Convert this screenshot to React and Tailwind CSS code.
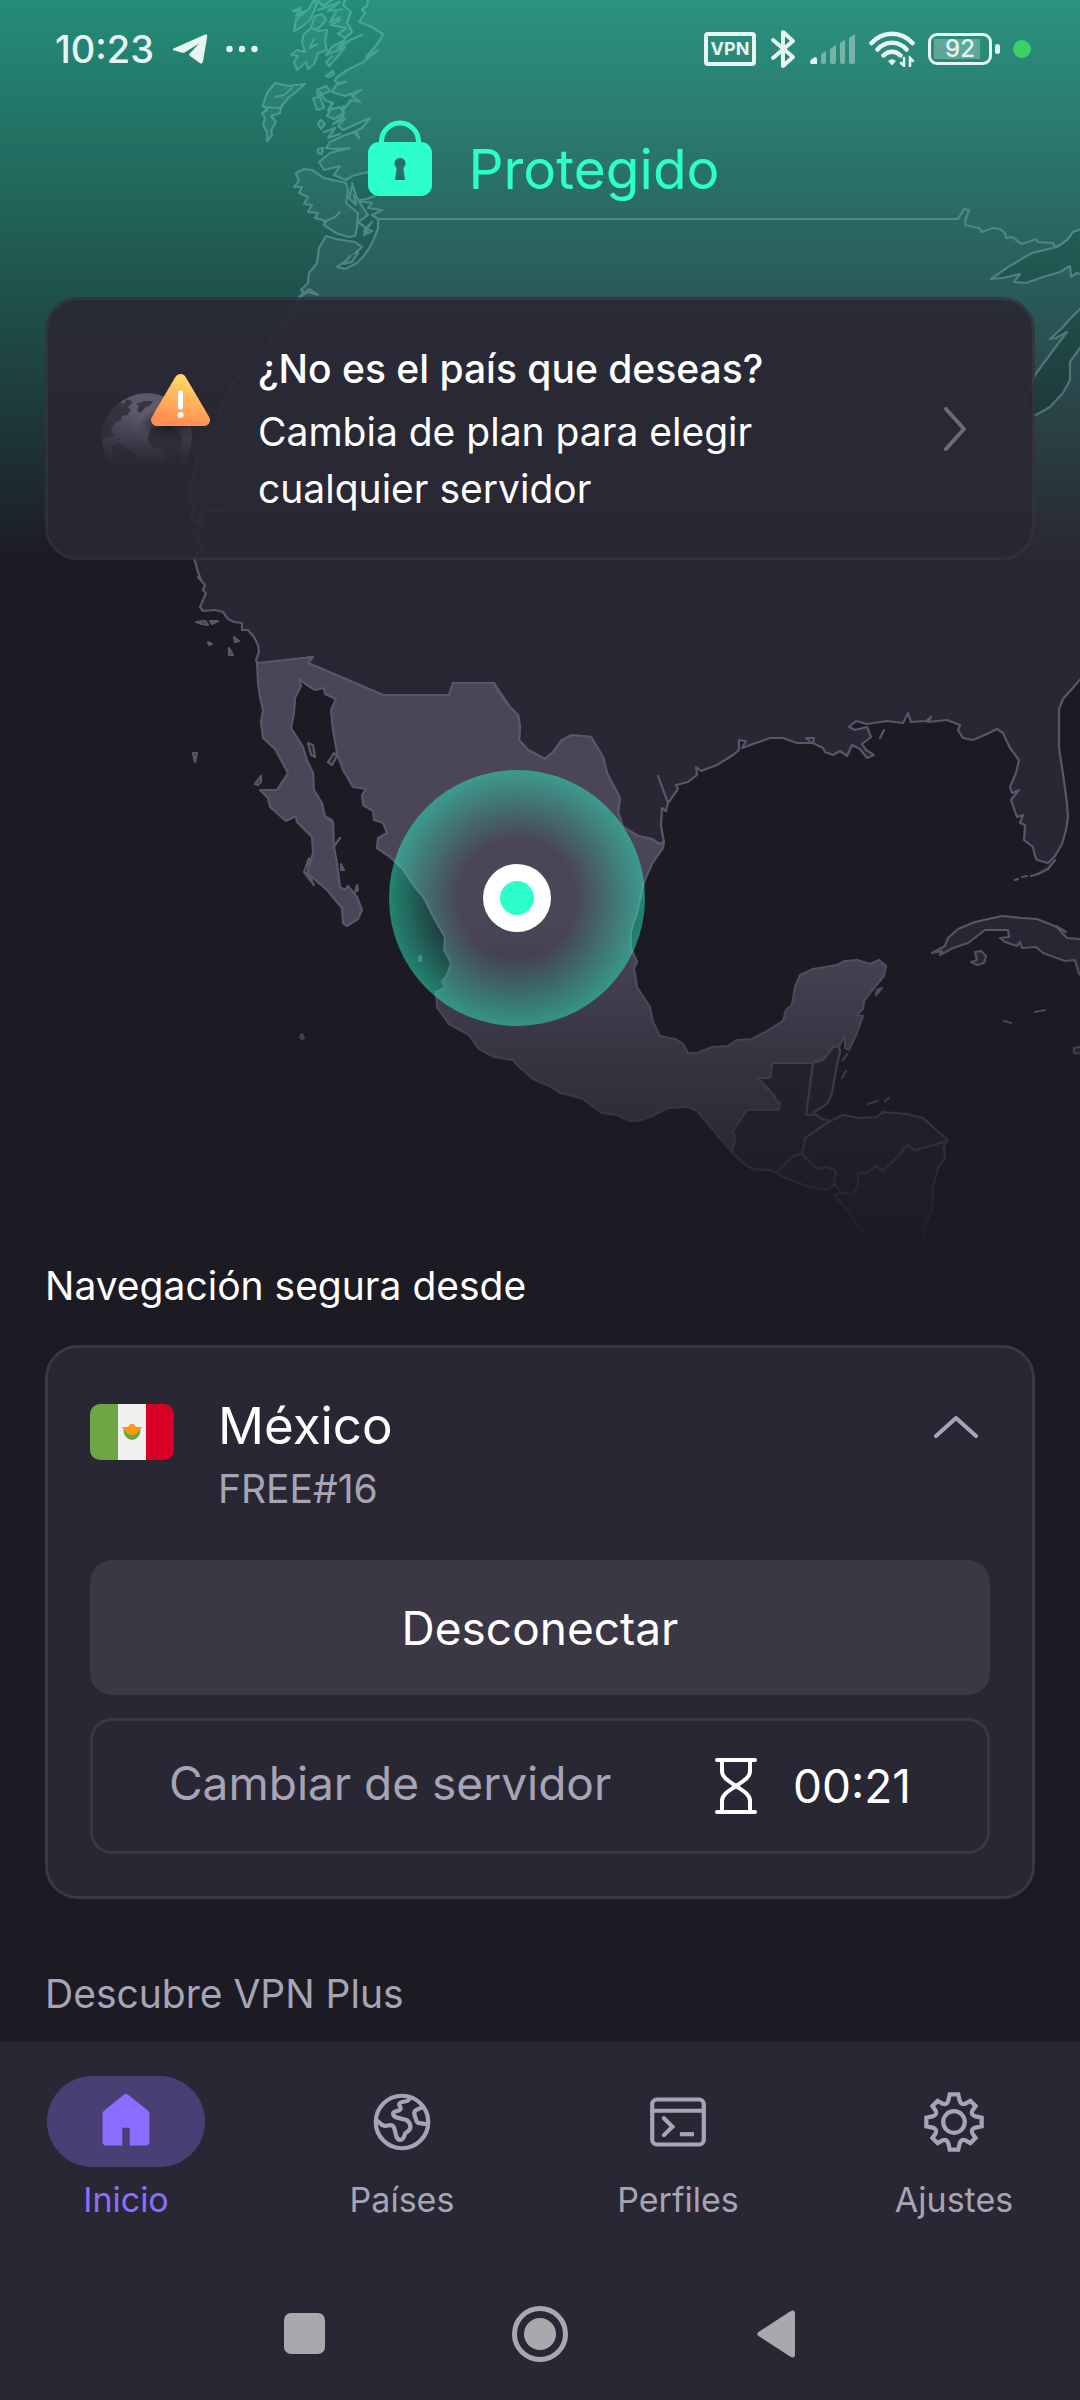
import React, { useState } from 'react';

const CONTINENT =
  'M365 -6 L368 0 367 6 362 9 365 13 359 22 370 26 383 34 380 40 374 48 366 57 377 51 362 63 347 70 336 78 335 81 338 83 346 82 336 85 332 92 345 96 361 90 352 96 360 102 351 100 345 108 338 112 344 106 343 116 333 124 345 118 338 126 343 130 370 118 362 128 354 132 359 138 356 131 343 136 330 142 326 148 334 149 350 148 330 153 319 162 324 170 340 166 334 175 346 180 352 176 368 172 372 185 375 196 366 199 356 201 372 203 368 208 382 210 372 215 378 219 378 228 375 236 372 243 368 250 362 258 357 263 345 269 337 267 350 258 362 247 355 242 336 239 326 236 319 248 317 263 309 273 308 283 301 290 304 292 299 297 308 292 318 295 309 289 298 300 272 340 251 362 231 384 220 413 217 427 196 444 194 453 198 462 188 488 194 510 190 516 203 528 198 516 206 509 222 511 205 511 201 517 203 528 194 535 196 538 202 545 200 551 194 558 198 572 201 580 198 577 205 585 203 590 206 593 200 607 203 611 215 610 223 612 228 619 234 622 242 623 242 630 248 630 254 637 258 645 259 652 256 660 258 664 313 657 308 663 383 695 449 695 453 683 494 683 510 707 518 715 520 727 519 740 528 750 545 759 553 752 562 740 572 735 591 737 603 757 607 773 620 798 618 812 623 827 638 836 652 839 659 844 664 842 661 826 662 808 666 811 668 803 658 776 668 803 678 789 676 785 688 782 697 775 696 767 701 771 717 765 733 755 739 750 739 740 746 741 742 748 753 744 770 738 783 738 797 743 812 743 806 738 814 738 813 743 823 748 825 752 833 755 840 751 847 756 852 745 860 749 867 758 874 755 866 750 862 744 871 737 867 727 855 730 849 727 856 721 867 724 887 721 903 723 908 713 911 722 926 721 931 717 928 722 947 720 960 725 958 730 963 738 973 740 987 734 997 729 1003 733 1010 748 1019 760 1016 773 1010 787 1012 793 1019 790 1011 800 1017 817 1023 815 1020 823 1025 825 1024 840 1033 847 1035 856 1037 860 1048 863 1055 856 1062 844 1066 830 1068 817 1067 803 1063 774 1059 748 1059 709 1063 699 1071 690 1090 668 V-6Z';

const MEXICO =
  'M257 663 L313 657 308 663 383 695 449 695 453 683 494 683 497 690 510 707 518 715 520 727 519 740 528 750 545 759 553 752 562 740 572 735 591 737 603 757 607 773 620 798 618 812 623 827 638 836 652 839 659 844 664 842 663 848 652 864 644 882 637 913 631 931 631 948 637 962 634 968 637 987 650 1007 653 1022 660 1036 675 1039 683 1044 688 1053 697 1053 712 1047 728 1046 737 1040 752 1039 767 1031 783 1021 786 1010 792 1005 795 987 800 975 813 969 837 965 845 961 857 960 870 964 879 960 886 966 884 976 873 989 864 1001 863 1009 857 1015 863 1016 857 1033 849 1050 845 1048 845 1036 839 1046 833 1047 823 1060 815 1060 813 1063 772 1063 770 1078 758 1078 765 1087 774 1095 776 1101 780 1103 778 1110 747 1110 733 1131 735 1138 732 1152 718 1136 697 1111 688 1107 668 1108 652 1116 638 1121 630 1121 617 1115 602 1113 583 1099 561 1093 551 1087 533 1079 519 1067 513 1060 494 1057 479 1049 469 1035 449 1024 437 1007 436 992 446 987 442 982 447 975 451 963 444 950 445 937 434 918 424 898 412 883 402 868 390 857 377 848 378 838 387 833 383 823 374 820 373 811 363 805 362 795 366 789 353 787 343 770 337 753 333 730 331 710 336 699 325 694 324 688 315 690 307 685 299 679 301 686 295 698 294 713 291 728 303 747 307 760 313 773 314 790 322 803 325 817 333 822 334 847 337 863 340 887 345 890 348 886 357 897 362 910 358 919 347 926 343 923 342 908 327 890 307 873 313 853 312 837 297 822 296 816 286 821 270 807 268 798 260 790 277 790 288 773 275 749 263 738 261 722 263 710 260 697 258 683Z';

const CENTRAL_AMERICA =
  'M839 1046 L840 1052 836 1070 832 1093 828 1103 813 1113 822 1119 830 1121 843 1115 860 1118 877 1117 883 1112 907 1114 923 1118 933 1127 948 1140 944 1146 945 1158 938 1168 933 1187 932 1211 926 1223 922 1244 930 1268 H873 L877 1247 860 1229 848 1211 834 1195 841 1193 835 1184 827 1190 810 1187 785 1178 770 1170 753 1169 743 1163 732 1152 735 1138 733 1131 747 1110 778 1110 780 1103 776 1101 774 1095 758 1078 770 1078 772 1063 813 1063 823 1060 833 1047Z';

const BORDERS = [
  'M378 219 H958 L964 209 969 210 966 218 965 225 979 228 982 232 993 228 1000 229 1005 233 1006 238 1012 237 1022 244 1036 239 1038 242 1053 243 1055 247 1060 245',
  'M813 1063 L806 1115 H813',
  'M830 1121 L805 1138 802 1154 793 1156 777 1172',
  'M802 1154 L817 1169 827 1167 836 1171 833 1187',
  'M841 1193 L852 1194 858 1187 858 1173 867 1173 876 1166 883 1171 898 1156 907 1145 915 1150 930 1146 947 1141',
  'M877 1247 L892 1251 904 1248 918 1255 925 1252',
];

const LAKES = [
  'M991 279 L1008 267 1032 253 1057 247 1067 240 1073 232 1090 226 V277 L1077 273 1071 277 1070 266 1060 272 1043 277 1026 283 1014 282 1020 274 1003 278Z',
  'M1090 302 L1080 309 1067 322 1062 328 1050 339 1056 338 1067 332 1057 345 1046 360 1035 375 1026 397 1026 413 1036 415 1050 407 1063 393 1070 380 1070 362 1080 348 1090 342Z',
];

const ISLANDS = [
  // Vancouver
  'M296 173 L304 169 312 170 324 178 346 183 348 190 346 203 358 213 357 228 355 236 348 237 336 233 324 225 326 221 315 218 318 213 308 212 312 205 304 204 308 197 299 193 302 187 294 187 299 181Z M324 222 L335 217 340 212',
  'M352 183 L356 196 362 206 368 215 358 222 366 228 372 222 364 232 M352 186 L349 198 356 205 354 195',
  'M365 228 L372 231 364 235 368 229 M350 256 L344 264 352 262 358 253',
  // Haida Gwaii
  'M275 83 L288 86 305 84 296 92 288 98 281 107 280 113 271 116 276 122 271 130 272 135 267 141 267 132 263 125 265 118 262 113 267 110 263 105 267 93Z M263 107 L279 108 M275 97 L284 95 292 88',
  // Alexander archipelago
  'M293 11 L301 8 296 16 308 10 314 0 317 4 310 20 300 28 294 31 296 20 305 12Z',
  'M317 0 L323 6 335 -2 M318 10 L340 2 328 11 346 9 349 20 343 16 330 22 336 12 M310 30 L315 16 322 14 326 20 319 28Z',
  'M345 0 L343 5 351 12 347 22 352 32 345 38 338 34 346 28 331 25 340 20',
  'M304 34 L311 28 318 31 327 30 325 42 327 50 318 53 314 64 308 69 306 62 297 70 294 62 298 56 291 55 297 50 305 52 302 42Z M314 39 L310 48 317 44',
  'M362 35 L350 40 338 48 345 40 333 46 326 55 334 52 345 47 338 56 329 66 326 62 332 56',
  'M326 76 L333 71 334 74 329 77Z M317 90 L326 86 330 91 323 94 318 96Z M313 98 L320 97 324 108 317 110Z',
  'M320 92 L325 100 333 103 328 110 340 107 344 113 334 119 327 116 331 108 M321 120 L325 124 321 129 318 124Z',
  'M324 132 L335 128 328 138 340 134 M318 149 L323 148 322 154 318 153Z',
  // Pacific
  'M196 622 L205 621 208 625 202 624Z M210 621 L218 621 212 624Z M208 642 L212 644 209 645Z M234 637 L239 641 235 642Z M229 648 L233 655 229 655Z',
  'M193 753 L197 753 195 762Z M255 784 L261 776 261 782 258 785Z M308 743 L313 745 315 757 311 755Z M328 762 L334 753 337 756 332 765Z',
  'M300 1037 L302 1034 304 1038 302 1039Z M419 957 L421 956 421 961 419 961Z M309 858 L304 872 314 885 308 874Z M332 820 L326 817 327 825Z M335 845 L340 838 M341 864 L344 870 341 870Z M355 892 L357 885 358 890Z',
  // Caribbean
  'M932 953 L945 946 948 938 958 929 975 922 1002 916 1022 918 1037 919 1057 927 1067 938 1090 940 V980 L1079 974 1075 960 1065 961 1043 953 1036 947 1022 948 1020 942 1017 946 1005 942 1000 938 1009 937 1008 930 985 930 968 943 953 948 940 955 942 951Z',
  'M1056 926 L1066 932',
  'M975 952 L981 951 986 956 984 963 977 965 971 962 977 960Z',
  'M1035 1012 L1045 1010Z M1004 1021 L1011 1023Z M876 995 L877 990 882 988Z M843 1060 L847 1054Z M842 1078 L846 1071Z M868 1104 L878 1101Z M885 1101 L889 1098Z M1090 1045 L1074 1048 1074 1053 1090 1054Z',
  'M752 1041 L760 1036 768 1038 761 1045 753 1044Z M631 955 L637 962 634 967 M880 738 L884 730',
  'M1015 880 L1018 879 M1022 877 L1027 876 M1031 876 L1038 874 1048 869 1055 860',
];

// Background map with the location marker
const MapBackground = () => (
  <svg viewBox="0 0 1080 1280" className="absolute inset-x-0 top-0 w-full" role="img" aria-label="Mapa: México">
    <defs>
      <linearGradient id="glow" x1="0" y1="0" x2="0" y2="560" gradientUnits="userSpaceOnUse">
        <stop offset="0" stopColor="#2cffcc" stopOpacity="0.5" />
        <stop offset="1" stopColor="#2cffcc" stopOpacity="0" />
      </linearGradient>
      <linearGradient id="fade" x1="0" y1="920" x2="0" y2="1256" gradientUnits="userSpaceOnUse">
        <stop offset="0" stopColor="#1c1b24" stopOpacity="0" />
        <stop offset="1" stopColor="#1c1b24" />
      </linearGradient>
      <radialGradient id="halo">
        <stop offset="0.46" stopColor="#2cffcc" stopOpacity="0" />
        <stop offset="1" stopColor="#2cffcc" stopOpacity="0.46" />
      </radialGradient>
    </defs>
    <g fill="#292733" stroke="#5a566a" strokeWidth="2.2" strokeLinejoin="round" strokeLinecap="round">
      <path d={CONTINENT} />
      <path d={CENTRAL_AMERICA} />
      {ISLANDS.map((d) => <path key={d} d={d} />)}
      {BORDERS.map((d) => <path key={d} d={d} fill="none" />)}
      {LAKES.map((d) => <path key={d} d={d} fill="#1c1b24" />)}
      <path d={MEXICO} fill="#4a4657" />
    </g>
    <rect y="920" width="1080" height="360" fill="url(#fade)" />
    <rect width="1080" height="560" fill="url(#glow)" />
    <circle cx="517" cy="898" r="128" fill="url(#halo)" />
    <circle cx="517" cy="898" r="34" fill="#fff" />
    <circle cx="517" cy="898" r="17" fill="#2cffcc" />
  </svg>
);

const StatusBar = () => (
  <div className="flex h-[97px] items-center justify-between pr-[49px] pl-[55px] text-[#e6f5f1]">
    <div className="flex items-center gap-[18px]">
      <span className="text-[38px] leading-[48px] font-medium">10:23</span>
      <svg viewBox="0 0 36 30" className="h-[30px] w-9" fill="currentColor">
        <path d="M1.500 14.500 33 .6c1.600-.6 2.500.3 2.200 2L31 27.600c-.3 1.800-1.800 2.300-3.200 1.300L18 22c-1-.8-1-1.600-.2-2.500L27 9.500 13 18.300c-1 .6-2 .7-3 .4l-8.300-2.400c-1-.4-1.100-1.300-.2-1.800z" />
      </svg>
      <svg viewBox="0 0 32 8" className="h-2 w-8" fill="currentColor">
        <circle cx="3.500" cy="4" r="3.200" /><circle cx="16" cy="4" r="3.200" /><circle cx="28.500" cy="4" r="3.200" />
      </svg>
    </div>
    <div className="flex items-center gap-[13px]">
      <span className="flex h-[34px] w-[52px] items-center justify-center rounded border-4 border-current text-[18px] leading-none font-bold">VPN</span>
      <svg viewBox="0 0 28 40" className="h-10 w-7" fill="none" stroke="currentColor" strokeWidth="4" strokeLinejoin="round" strokeLinecap="round">
        <path d="M4 11 24 28 14 37V3l10 9L4 29" />
      </svg>
      <svg viewBox="0 0 46 30" className="h-[30px] w-[46px]" fill="currentColor">
        <path d="M0 28q0-2 2-3l3-2q2 0 2 2v5H2q-2 0-2-2z" />
        <path opacity=".4" d="M11 20l5-3v11q0 2-2 2h-1q-2 0-2-2zM20 15l6-4v17q0 2-2 2h-2q-2 0-2-2zM30 9l5-3v22q0 2-2 2h-1q-2 0-2-2zM39 4l6-4v28q0 2-2 2h-2q-2 0-2-2z" />
      </svg>
      <svg viewBox="0 0 46 36" className="h-9 w-[46px]" fill="none" stroke="currentColor" strokeWidth="4.500" strokeLinecap="round">
        <path d="M2.500 12C14-.5 32-.5 43.500 12M8.500 18.500c8-9 21-9 29 0M14.500 24.500c5-5 12-5 17 0" />
        <path d="M19 30q4-3.500 8 0l-4 4.500z" fill="currentColor" stroke="none" />
        <path d="M35 27v8l-3-3M41 35v-8l3 3" strokeWidth="2.500" />
      </svg>
      <span className="flex items-center gap-[3px]">
        <span className="flex h-8 w-16 items-center rounded-[9px] border-3 border-current p-[3px]">
          <span className="flex h-full w-[46px] items-center justify-center bg-white/25 pl-[6px] text-[24px] leading-none font-medium">92</span>
        </span>
        <span className="h-[10px] w-[5px] rounded-sm bg-current" />
      </span>
      <span className="h-[18px] w-[18px] rounded-full bg-[#3ad168]" />
    </div>
  </div>
);

const LockIcon = () => (
  <svg viewBox="0 0 64 76" className="h-[76px] w-16" fill="none">
    <path d="M13.500 26v-4.500a18.500 18.500 0 0 1 37 0V26" stroke="#2cffcc" strokeWidth="5" />
    <rect y="22" width="64" height="54" rx="11" fill="#2cffcc" />
    <path d="M32 38a5.500 5.500 0 0 1 3.300 9.900L37 60H27l1.700-12.100A5.500 5.500 0 0 1 32 38z" fill="#2b6e66" />
  </svg>
);

const GlobeWarning = () => (
  <svg viewBox="0 0 110 110" className="h-[110px] w-[110px] shrink-0">
    <defs>
      <radialGradient id="ball" cx="0.5" cy="0.3" r="0.6">
        <stop offset="0" stopColor="#696578" />
        <stop offset="1" stopColor="#4a4756" />
      </radialGradient>
      <linearGradient id="ballFade" x1="0" y1="0" x2="0" y2="1">
        <stop offset="0.3" stopColor="#fff" />
        <stop offset="0.85" stopColor="#fff" stopOpacity="0" />
      </linearGradient>
      <mask id="ballMask"><rect width="110" height="110" fill="url(#ballFade)" /></mask>
      <clipPath id="ballClip"><circle cx="47" cy="64" r="45" /></clipPath>
      <linearGradient id="warn" x1="0.6" y1="0" x2="0.3" y2="1">
        <stop offset="0" stopColor="#ffd366" />
        <stop offset="1" stopColor="#ff9051" />
      </linearGradient>
      <radialGradient id="shade">
        <stop offset="0" stopColor="#131218" />
        <stop offset="1" stopColor="#131218" stopOpacity="0" />
      </radialGradient>
    </defs>
    <g mask="url(#ballMask)" clipPath="url(#ballClip)">
      <circle cx="47" cy="64" r="45" fill="url(#ball)" />
      <path fill="#383541" d="M14 33l5-5 5 2 3-5 6 3-5 5 3 3-4 5-5 1-1 4-5 2-4 5-1 4 4 5-6 1-7 2-3-4 1-12zM36 30l8-3h9l-3 5-4 1-6 6-3-3 2-4zM12 71l7-2 6 4 4 3 8 4-3 9-2 8-8 4-6-4-2-9-4-7zM48 63l3-9 16-2 12 6 4 8-4 9 1 10-5 8-6 6-4-8 1-9-5-7-8-2-5-5z" />
      <ellipse cx="70" cy="50" rx="32" ry="17" fill="url(#shade)" />
    </g>
    <path d="M80.500 6 104 46H57z" fill="url(#warn)" stroke="url(#warn)" strokeWidth="12" strokeLinejoin="round" />
    <path d="M80.500 19v14" stroke="#fff" strokeWidth="5" strokeLinecap="round" />
    <circle cx="80.500" cy="41" r="3" fill="#fff" />
  </svg>
);

const MexicoFlag = () => (
  <svg viewBox="0 0 84 56" className="mt-3 h-14 w-[84px] shrink-0 rounded-[10px]" role="img" aria-label="Bandera de México">
    <path fill="#6da544" d="M0 0h28v56H0z" />
    <path fill="#f0f0f0" d="M28 0h28v56H28z" />
    <path fill="#d80027" d="M56 0h28v56H56z" />
    <path fill="#6da544" d="M33.500 26a8.500 10 0 0 0 17 0z" />
    <path fill="#ff9811" d="M32 23h6q4-7 8 0h6l-2 3h-1q-2 5-7 5t-7-5h-1z" />
  </svg>
);

const HourglassIcon = () => (
  <svg viewBox="0 0 42 58" className="h-[58px] w-[42px]" fill="none" stroke="#fff" strokeWidth="4" strokeLinecap="round">
    <path d="M2 3h38M2 55h38M7 4v10c0 7 7 10 14 15 7-5 14-8 14-15V4M7 54V44c0-7 7-10 14-15 7 5 14 8 14 15v10" />
  </svg>
);

const navItems = [
  {
    id: 'inicio',
    label: 'Inicio',
    icon: (
      <path
        fill="currentColor"
        stroke="none"
        d="M29 3.500q3-2.500 6 0l20.500 16.500Q57 21.200 57 23v30q0 4-4 4H36V38h-8v19H11q-4 0-4-4V23q0-1.800 1.500-3z"
      />
    ),
  },
  {
    id: 'paises',
    label: 'Países',
    icon: (
      <>
        <circle cx="32" cy="32" r="28" />
        <path d="M40 6c0 6-11 3-11 7 0 3 2 2 1.500 5s-8 1.500-8 5c0 6 11 5 14.500 7 3 2 4 4 4 7 0 5-5 5-6 8-1 4-2 6-5 6-6 0-4-12-8-15-3-2-6 1-9 0-4-1-5-4-7-5M54 16l-6.500 3q-3 1.500-2.300 5l2 6q.6 3 3.300 3.300l8 1" />
      </>
    ),
  },
  {
    id: 'perfiles',
    label: 'Perfiles',
    icon: (
      <>
        <rect x="4.500" y="8" width="55" height="48" rx="5" />
        <path d="M4.500 20h55M17 28l9 9-9 9" />
        <path d="M34 45h15" strokeLinecap="butt" />
      </>
    ),
  },
  {
    id: 'ajustes',
    label: 'Ajustes',
    icon: (
      <>
        <path d="M27.500 2.500H36.500L38 9Q39.500 14 44 12.500L49.500 9.500 55 15 51.500 20Q49.500 24.500 55 26L61.500 27.500V36.500L55 38Q49.500 39.500 51.500 44L55 49 49.500 54.500 44 51.500Q39.500 50 38 55L36.500 61.500H27.500L26 55Q24.500 50 20 51.500L14.500 54.500 9 49 12.500 44Q14.500 39.500 9 38L2.500 36.500V27.500L9 26Q14.500 24.500 12.500 20L9 15 14.500 9.500 20 12.500Q24.500 14 26 9Z" />
        <circle cx="32" cy="32" r="11.500" />
      </>
    ),
  },
];

const BottomNav = ({ active, onSelect }) => (
  <nav className="flex justify-between px-[47px] pt-[34px] pb-[42px]">
    {navItems.map((item) => (
      <button
        key={item.id}
        onClick={() => onSelect(item.id)}
        className={`flex w-[158px] flex-col items-center gap-[7px] ${active === item.id ? 'text-[#8a6eff]' : 'text-[#a7a4b5]'}`}
      >
        <span className={`flex h-[91px] w-full items-center justify-center rounded-full ${active === item.id ? 'bg-[#4a3f75]' : ''}`}>
          <svg viewBox="0 0 64 64" className="h-[60px] w-[60px]" fill="none" stroke="currentColor" strokeWidth="4.500" strokeLinecap="round">
            {item.icon}
          </svg>
        </span>
        <span className="text-[34px] leading-[51px]">{item.label}</span>
      </button>
    ))}
  </nav>
);

// Android navigation buttons
const SystemNav = () => (
  <div className="flex h-[133px] items-center justify-center gap-[180px] text-[#a9a8ad]">
    <button aria-label="Recientes" className="flex w-14 justify-center">
      <span className="h-[41px] w-[41px] rounded-[7px] bg-current" />
    </button>
    <button aria-label="Pantalla de inicio" className="flex h-14 w-14 items-center justify-center rounded-full border-5 border-current">
      <span className="h-8 w-8 rounded-full bg-current" />
    </button>
    <button aria-label="Atrás" className="flex w-14 justify-center">
      <svg viewBox="0 0 38 48" className="h-12 w-[38px]" fill="currentColor">
        <path d="M1.500 22 33 1.500Q38-1.500 38 4v40q0 5.500-5 2.500L1.500 26Q-1 24 1.500 22z" />
      </svg>
    </button>
  </div>
);

export default function App() {
  const [tab, setTab] = useState('inicio');
  const [open, setOpen] = useState(true);

  return (
    <div className="relative flex min-h-screen flex-col bg-[#1c1b24] font-['Inter',sans-serif] text-white">
      <MapBackground />

      <div className="relative flex flex-1 flex-col">
        <StatusBar />

        <header className="flex items-center justify-center gap-9 pt-[10px] pl-2">
          <LockIcon />
          <h1 className="pt-6 text-[55px] leading-[77px] text-[#2cffcc]">Protegido</h1>
        </header>

        <main className="flex flex-1 flex-col px-[45px] pt-[89px] pb-5">
          {/* Aviso de cambio de plan */}
          <button className="flex w-full items-center rounded-[33px] border-3 border-[#34313f]/80 bg-[#292733]/92 bg-clip-padding py-10 pr-[66px] pl-[52px] text-left text-[39px] leading-[57px]">
            <GlobeWarning />
            <span className="ml-12 flex flex-1 flex-col gap-[6px]">
              <span className="font-medium">¿No es el país que deseas?</span>
              <span className="max-w-[560px]">Cambia de plan para elegir cualquier servidor</span>
            </span>
            <svg viewBox="0 0 22 44" className="h-11 w-[22px]" fill="none" stroke="#6d697d" strokeWidth="4" strokeLinecap="round" strokeLinejoin="round">
              <path d="M2 2l18 20L2 42" />
            </svg>
          </button>

          <h2 className="mt-auto text-[39px] leading-[57px]">Navegación segura desde</h2>

          {/* Conexión actual */}
          <section className="mt-[31px] rounded-[33px] border-3 border-[#3b3745] bg-[#292733] px-[42px] pt-11 pb-[42px]">
            <button onClick={() => setOpen(!open)} aria-expanded={open} className="flex w-full items-start text-left">
              <MexicoFlag />
              <span className="ml-11 flex flex-1 flex-col">
                <span className="text-[51px] leading-[68px]">México</span>
                <span className="text-[39px] leading-[57px] text-[#a7a4b5]">FREE#16</span>
              </span>
              <svg viewBox="0 0 44 22" className="mt-6 mr-3 h-[22px] w-11" fill="none" stroke="#a7a4b5" strokeWidth="4" strokeLinecap="round" strokeLinejoin="round">
                <path d={open ? 'M2 20 22 2l20 18' : 'M2 2l20 18L42 2'} />
              </svg>
            </button>
            {open && (
              <div className="mt-[43px] flex flex-col gap-[23px] text-[46px] leading-[60px]">
                <button className="h-[135px] w-full rounded-[22px] bg-[#3b3745]">Desconectar</button>
                <button className="flex h-[136px] w-full items-center rounded-[22px] border-3 border-[#3b3745] px-[76px]">
                  <span className="pb-[6px] text-[#a7a4b5]">Cambiar de servidor</span>
                  <span className="ml-auto flex items-center gap-9">
                    <HourglassIcon />
                    <span>00:21</span>
                  </span>
                </button>
              </div>
            )}
          </section>

          <h2 className="mt-[66px] text-[39px] leading-[57px] text-[#a7a4b5]">Descubre VPN Plus</h2>
        </main>
      </div>

      <footer className="relative bg-[#292733]">
        <BottomNav active={tab} onSelect={setTab} />
        <SystemNav />
      </footer>
    </div>
  );
}
